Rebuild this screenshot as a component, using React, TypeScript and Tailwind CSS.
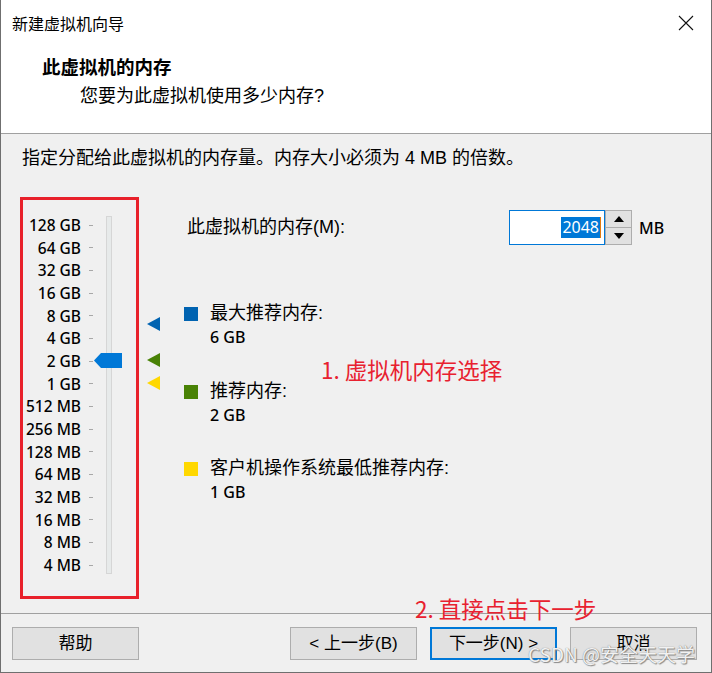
const scale = [
  '128 GB', '64 GB', '32 GB', '16 GB', '8 GB', '4 GB', '2 GB', '1 GB',
  '512 MB', '256 MB', '128 MB', '64 MB', '32 MB', '16 MB', '8 MB', '4 MB',
];

const markers = [
  { top: 147, color: '#0063b1' },
  { top: 183, color: '#498205' },
  { top: 206, color: '#ffd800' },
];

const legend = [
  { label: '最大推荐内存:', value: '6 GB', color: 'bg-[#0063b1]', mt: 'mt-[56px]' },
  { label: '推荐内存:', value: '2 GB', color: 'bg-[#498205]', mt: 'mt-[30px]' },
  { label: '客户机操作系统最低推荐内存:', value: '1 GB', color: 'bg-[#ffd800]', mt: 'mt-[29px]' },
];

function Btn({ children, primary }: { children: React.ReactNode; primary?: boolean }) {
  return (
    <div
      className={
        'w-[127px] h-[33px] flex items-center justify-center bg-[#e1e1e1] text-[17px] ' +
        (primary ? 'border-2 border-[#0078d7]' : 'border border-[#adadad]')
      }
    >
      {children}
    </div>
  );
}

export default function App() {
  return (
    <div className="relative w-[712px] h-[673px] overflow-hidden border-x border-b border-[#6f6f6f] bg-[#f0f0f0] text-black font-['Liberation_Sans','Noto_Sans_CJK_SC',sans-serif]">
      {/* header */}
      <div className="h-[134px] bg-white border-b border-[#a0a0a0]">
        <div className="h-[45px] flex items-center justify-between pl-[11px] pr-[17px]">
          <span className="text-[16px] font-['Noto_Sans_CJK_SC',sans-serif]">新建虚拟机向导</span>
          <svg width="16" height="16" viewBox="0 0 16 16">
            <path d="M1 1 L15 15 M15 1 L1 15" stroke="#111" strokeWidth="1.1" />
          </svg>
        </div>
        <div className="mt-[11px] pl-[41px] leading-[24px] text-[18.5px] font-bold">此虚拟机的内存</div>
        <div className="mt-[4px] pl-[79px] leading-[24px] text-[18px]">您要为此虚拟机使用多少内存?</div>
      </div>

      {/* body */}
      <div className="h-[479px]">
        <div className="pt-[12px] pl-[21px] leading-[24px] text-[18px]">
          指定分配给此虚拟机的内存量。内存大小必须为 4 MB 的倍数。
        </div>

        <div className="flex items-start">
          {/* slider column */}
          <div className="relative w-[170px] h-[420px] pt-[44px] flex items-start">
            <div className="w-[80px] flex flex-col font-['Noto_Sans',sans-serif] font-medium">
              {scale.map(s => (
                <div key={s} className="h-[22.67px] leading-[22.67px] text-right text-[15.5px]">
                  {s}
                </div>
              ))}
            </div>
            <div className="ml-[8px] w-[4px] flex flex-col">
              {scale.map(s => (
                <div key={s} className="h-[22.67px] flex items-center">
                  <div className="w-[4px] h-px bg-[#a8a8a8]" />
                </div>
              ))}
            </div>
            <div className="ml-[13px] mt-[2px] w-[6px] h-[358px] bg-[#e7eaea] border border-[#d6d6d6]" />

            {/* thumb */}
            <svg className="absolute left-[93px] top-[183px]" width="28" height="15" viewBox="0 0 28 15">
              <polygon points="7,0 28,0 28,15 7,15 0,7.5" fill="#0078d7" />
            </svg>

            {markers.map(m => (
              <svg
                key={m.color}
                className="absolute left-[146px]"
                style={{ top: m.top }}
                width="13"
                height="14"
                viewBox="0 0 13 14"
              >
                <polygon points="13,0 0,7 13,14" fill={m.color} />
              </svg>
            ))}
          </div>

          {/* settings column */}
          <div className="flex-1 pt-[40px]">
            <div className="flex items-center h-[35px] pl-[16px]">
              <span className="w-[322px] text-[18px]">此虚拟机的内存(M):</span>
              <div className="w-[96px] h-[35px] bg-white border border-[#0078d7] flex items-center justify-end pr-[3px]">
                <span className="bg-[#0078d7] text-white text-[16px] leading-[21px] px-px font-['Noto_Sans',sans-serif]">2048</span>
                <span className="w-px h-[21px] bg-[#e07a10]" />
              </div>
              <div className="w-[27px] h-[35px] flex flex-col border border-[#adadad] bg-[#e1e1e1]">
                <div className="flex-1 flex items-center justify-center border-b border-[#adadad]">
                  <svg width="10" height="6" viewBox="0 0 10 6">
                    <polygon points="0,6 5,0 10,6" fill="#000" />
                  </svg>
                </div>
                <div className="flex-1 flex items-center justify-center">
                  <svg width="10" height="6" viewBox="0 0 10 6">
                    <polygon points="0,0 10,0 5,6" fill="#000" />
                  </svg>
                </div>
              </div>
              <span className="ml-[7px] text-[16px] font-['Noto_Sans',sans-serif] font-medium">MB</span>
            </div>

            {legend.map(l => (
              <div key={l.label} className={`${l.mt} flex items-start pl-[13px]`}>
                <div className={`w-[14px] h-[14px] mt-[6px] ${l.color}`} />
                <div className="ml-[12px] leading-[24px]">
                  <div className="text-[18px]">{l.label}</div>
                  <div className="text-[16px] font-medium font-['Noto_Sans',sans-serif]">{l.value}</div>
                </div>
              </div>
            ))}
          </div>
        </div>
      </div>

      {/* footer */}
      <div className="h-[59px] border-t border-[#a0a0a0] flex items-start pt-[13px] pl-[11px] pr-[14px]">
        <Btn>帮助</Btn>
        <div className="ml-auto flex gap-[13px]">
          <Btn>&lt; 上一步(B)</Btn>
          <Btn primary>下一步(N) &gt;</Btn>
          <Btn>取消</Btn>
        </div>
      </div>

      {/* annotations */}
      <div className="absolute left-[19px] top-[197px] w-[119px] h-[402px] border-[3px] border-[#e8202a]" />
      <div className="absolute left-[320px] top-[354px] leading-[30px] text-[22.5px] text-[#e8212f] font-['Noto_Sans_CJK_SC',sans-serif]">
        1. 虚拟机内存选择
      </div>
      <div className="absolute left-[414px] top-[593px] leading-[30px] text-[22.5px] text-[#e8212f] font-['Noto_Sans_CJK_SC',sans-serif]">
        2. 直接点击下一步
      </div>
      <div className="absolute left-[527px] top-[641px] leading-[26px] text-[19px] text-white/90 font-['Noto_Sans_CJK_SC',sans-serif] [text-shadow:0_0_1px_#6b6b6b,1px_1px_1px_#8a8a8a]">
        CSDN @安全天天学
      </div>
    </div>
  );
}
